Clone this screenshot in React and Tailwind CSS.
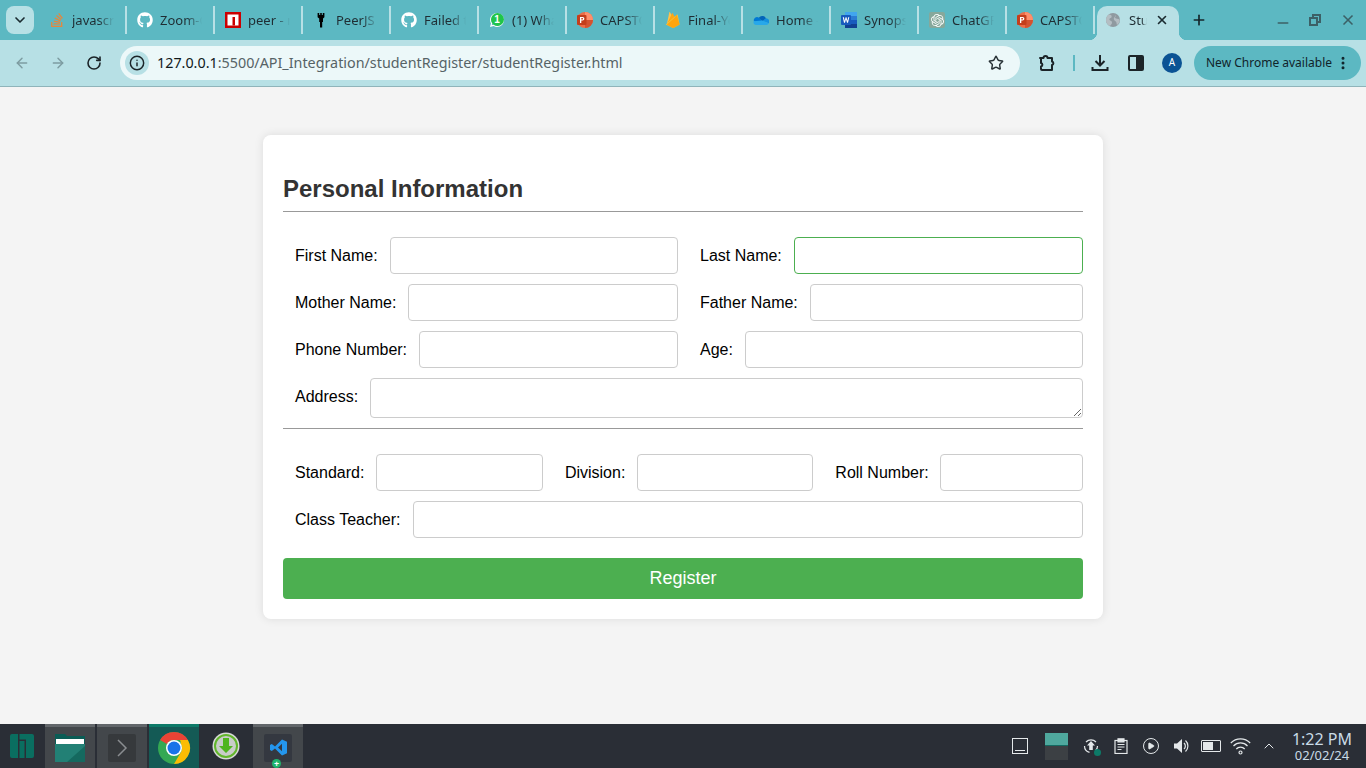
import React from "react";
import { FaGithub, FaStackOverflow, FaWhatsapp } from "react-icons/fa6";
import { SiOpenai } from "react-icons/si";
import { ArrowLeft, ArrowRight, RotateCw, Info, Star, X, Plus, Minus, EllipsisVertical, ChevronDown, ChevronUp, Play } from "lucide-react";

const Ppt = () => (
  <svg width="16" height="16" viewBox="0 0 16 16">
    <circle cx="8" cy="8" r="8" fill="#ed6c47" />
    <path d="M8 0a8 8 0 0 1 8 8H8z" fill="#ff8f6b" />
    <path d="M8 8h8a8 8 0 0 1-8 8z" fill="#d35230" />
    <rect x="0" y="3" width="9.5" height="10" rx="1" fill="#c43e1c" />
    <path d="M3 5h2.6a1.8 1.8 0 0 1 0 3.6H4.3V11H3z M4.3 6.1v1.4h1.1a.7.7 0 0 0 0-1.4z" fill="#fff" fillRule="evenodd" />
  </svg>
);
const Word = () => (
  <svg width="16" height="16" viewBox="0 0 16 16">
    <rect x="4" y="0" width="12" height="16" rx="1" fill="#2b7cd3" />
    <rect x="4" y="0" width="12" height="4" fill="#41a5ee" />
    <rect x="4" y="8" width="12" height="4" fill="#185abd" />
    <rect x="4" y="12" width="12" height="4" fill="#103f91" />
    <rect x="0" y="3" width="10" height="10" rx="1" fill="#185abd" />
    <path d="M1.8 5.2h1.1l.8 3.6.9-3.6h.9l.9 3.6.8-3.6h1.1L7 10.8H6L5 7.2l-1 3.6H3z" fill="#fff" />
  </svg>
);
const Firebase = () => (
  <svg width="16" height="16" viewBox="0 0 16 16">
    <path d="M1.800 12.600 4.300 0.400c.1-.4.5-.4.7-.1l2.600 4.600z" fill="#ffc24a" />
    <path d="M1.800 12.600 10 5.200 7.600 1.200c-.2-.3-.5-.3-.6 0z" fill="#ffa712" />
    <path d="M11.800 2.800c.1-.4.6-.5.800-.2l2 10-5.800 3.200c-.4.200-.9.200-1.300 0l-6.700-3.200z" fill="#f6c23c" />
    <path d="M1.800 12.800 10 5.200l1.800-2.400 2.800 9.800-5.800 3.200c-.4.200-.9.200-1.300 0z" fill="#ffa50e" />
  </svg>
);
const OneDrive = () => (
  <svg width="16" height="16" viewBox="0 0 16 16">
    <path d="M6.600 5a4 4 0 0 1 6.400 1.400L9.500 9.600 5.600 6z" fill="#0364b8" />
    <path d="M5.600 5.400A3.400 3.400 0 0 0 .8 9.200l3.800 1.400 4.400-1.500z" fill="#0078d4" />
    <path d="M12.800 6.300a3.200 3.200 0 0 1 3 4.900L9.500 9.200z" fill="#1490df" />
    <path d="M.8 9.200A2.600 2.600 0 0 0 3.200 13h10.200a2.600 2.600 0 0 0 2.400-1.800L9.400 8.600z" fill="#28a8ea" />
  </svg>
);
const Npm = () => (
  <svg width="16" height="16" viewBox="0 0 16 16">
    <rect width="16" height="16" fill="#cb0000" />
    <rect x="2.500" y="2.500" width="11" height="11" fill="#fff" />
    <rect x="7.500" y="5" width="2.500" height="8.500" fill="#cb0000" />
  </svg>
);
const Peer = () => (
  <svg width="16" height="16" viewBox="0 0 16 16">
    <path d="M4.600 1h1.600v2h1V1h1.600v2h1V1h1.600v4.200l-1.400 1.400V10H6.200V6.600L4.600 5.200z" fill="#000" />
    <rect x="7" y="10" width="2.200" height="5.500" fill="#000" />
  </svg>
);
const Whats = () => (
  <span className="relative flex h-4 w-4 items-center justify-center">
    <FaWhatsapp className="absolute left-0 top-0 h-4 w-4 text-white" />
    <span className="absolute left-[1.500px] top-[1px] h-[13px] w-[13px] rounded-full bg-[#1fc54a]" />
    <span className="relative text-[10px] font-bold leading-none text-white [font-family:'Liberation_Sans',sans-serif]">1</span>
  </span>
);
const Globe = () => (
  <svg width="16" height="16" viewBox="0 0 16 16">
    <circle cx="8" cy="8" r="7" fill="#8f9aa0" />
    <path d="M4 2.500c2 .3 3 1 2.600 2.400S4 6 4.400 7.600 7 8.600 7 10.600 5.600 13 5 14c-2.500-1-4-3.500-4-6s1.200-4.300 3-5.500z M11 3c.5 1.200-1.500 2-.8 3s3 .3 4.600 1.800c0 2-1 4-2.800 5.200-.6-1.500-.1-2.800-1.500-3.800s-2.500-2.500-1-4z" fill="#b4bec3" />
  </svg>
);

const tabs = [
  { icon: <FaStackOverflow className="h-4 w-4 text-[#e8863a]" />, label: "javascript - Stack" },
  { icon: <FaGithub className="h-4 w-4 text-white" />, label: "Zoom-Clone" },
  { icon: <Npm />, label: "peer - npm" },
  { icon: <Peer />, label: "PeerJS - Simple" },
  { icon: <FaGithub className="h-4 w-4 text-white" />, label: "Failed to" },
  { icon: <Whats />, label: "(1) WhatsApp" },
  { icon: <Ppt />, label: "CAPSTONE" },
  { icon: <Firebase />, label: "Final-Year" },
  { icon: <OneDrive />, label: "Home - One" },
  { icon: <Word />, label: "Synopsis" },
  { icon: <span className="flex h-4 w-4 items-center justify-center rounded-[2px] bg-[#86a89b]"><SiOpenai className="h-[13px] w-[13px] text-white" /></span>, label: "ChatGPT" },
  { icon: <Ppt />, label: "CAPSTONE" },
];

function Tab({ icon, label }) {
  return (
    <div className="flex h-7 w-[88px] shrink-0 items-center border-r-2 border-[#b7e0e5] pl-2.5">
      <span className="flex h-4 w-4 shrink-0 items-center justify-center">{icon}</span>
      <span className="ml-[7px] w-[42px] overflow-hidden whitespace-nowrap pt-px text-[13px] text-[#1f2d33] [mask-image:linear-gradient(to_right,black_62%,transparent)]">{label}</span>
    </div>
  );
}

function Field({ label, className = "", labelClass = "", children }) {
  return (
    <div className={`flex items-center gap-3 ${className}`}>
      <label className={`whitespace-nowrap text-base text-black ${labelClass}`}>{label}</label>
      {children}
    </div>
  );
}

const inputCls = "h-[37px] min-w-0 flex-1 rounded border border-[#ccc] bg-white outline-none";

function Chrome() {
  return (
    <svg width="34" height="34" viewBox="0 0 34 34">
      <circle cx="17" cy="17" r="16" fill="#34a853" />
      <path d="M17 1a16 16 0 0 1 13.860 8H17a8 8 0 0 0-7 4L3.140 9A16 16 0 0 1 17 1z" fill="#ea4335" />
      <path d="M30.860 9A16 16 0 0 1 17 33l7-12a8 8 0 0 0-.100-8 8 8 0 0 0-.900-4z" fill="#fbbc04" />
      <circle cx="17" cy="17" r="8" fill="#fff" />
      <circle cx="17" cy="17" r="6.500" fill="#1a73e8" />
    </svg>
  );
}

export default function App() {
  return (
    <div className="flex h-screen w-full flex-col overflow-hidden bg-[#f4f4f4] [font-family:'Noto_Sans',sans-serif]">
      {/* tab strip */}
      <div className="flex h-10 shrink-0 items-end bg-[#5cb8c2]">
        <div className="mb-[6px] ml-[6px] mr-[5px] flex h-7 w-7 items-center justify-center rounded-lg bg-[#b7e0e5]">
          <ChevronDown className="h-4 w-4 text-[#1b2b30]" strokeWidth={2.500} />
        </div>
        <div className="mb-[6px] flex">
          {tabs.map((t, i) => (
            <Tab key={i} {...t} />
          ))}
        </div>
        <div className="relative ml-[2px] flex h-[34px] w-[82px] shrink-0 items-center rounded-t-[10px] bg-[#b7e0e5] pb-[6px] pl-2">
          <span className="absolute -left-[8px] bottom-0 h-2 w-2 bg-[radial-gradient(circle_at_0_0,transparent_8px,#b7e0e5_8.500px)]" />
          <span className="absolute -right-[8px] bottom-0 h-2 w-2 bg-[radial-gradient(circle_at_100%_0,transparent_8px,#b7e0e5_8.500px)]" />
          <Globe />
          <span className="ml-2 w-[18px] overflow-hidden whitespace-nowrap pt-px text-[13px] text-[#1f2d33] [mask-image:linear-gradient(to_right,black_70%,transparent)]">Student</span>
          <X className="ml-[8px] h-[14px] w-[14px] text-[#1b2b30]" strokeWidth={2.800} />
        </div>
        <Plus className="mb-[12px] ml-[12px] h-4 w-4 text-[#15262b]" strokeWidth={2.500} />
        <div className="mb-[12px] ml-auto flex items-center gap-[16px] pr-[10px] text-[#3c6066]">
          <Minus className="h-4 w-4 translate-y-[3px]" strokeWidth={2.500} />
          <svg width="16" height="16" viewBox="0 0 16 16" fill="none" stroke="currentColor" strokeWidth="2">
            <rect x="3" y="6" width="7" height="7" />
            <path d="M6 6V3h7v7h-3" />
          </svg>
          <X className="ml-px h-4 w-4" strokeWidth={2.500} />
        </div>
      </div>

      {/* toolbar */}
      <div className="flex h-[47px] shrink-0 items-center border-b border-[#8fb4ba] bg-[#b7e0e5] pb-[1px]">
        <ArrowLeft className="ml-[14px] h-4 w-4 text-[#7d9ca1]" strokeWidth={2.200} />
        <ArrowRight className="ml-[20px] h-4 w-4 text-[#7d9ca1]" strokeWidth={2.200} />
        <RotateCw className="ml-[20px] h-4 w-4 text-[#1b2428]" strokeWidth={2.400} />
        <div className="ml-[18px] flex h-[34px] w-[900px] items-center rounded-full bg-[#ecf8f9] pl-[5px] pr-4">
          <span className="flex h-6 w-6 items-center justify-center rounded-full bg-[#b7e0e5]">
            <Info className="h-4 w-4 text-[#1b2428]" strokeWidth={2.200} />
          </span>
          <span className="ml-2 whitespace-nowrap text-[14.340px] text-[#566366]">
            <span className="text-[#10181b]">127.0.0.1</span>:5500/API_Integration/studentRegister/studentRegister.html
          </span>
          <Star className="ml-auto h-4 w-4 text-[#2a3438]" strokeWidth={2.200} />
        </div>
        <svg className="ml-[18px]" width="18" height="18" viewBox="0 0 18 18" fill="none" stroke="#1b2428" strokeWidth="2" strokeLinejoin="round">
          <path d="M2 4h3.500a2 2 0 0 1 4 0H14v3.500a1.800 1.800 0 0 1 0 3.500V16H4a1 1 0 0 1-1-1v-2.500a1.800 1.800 0 0 0 0-3.500V5a1 1 0 0 0-1-1z" />
        </svg>
        <span className="ml-[17px] h-4 w-[2px] bg-[#5cb8c2]" />
        <svg className="ml-[16px]" width="18" height="18" viewBox="0 0 18 18" fill="none" stroke="#1b2428" strokeWidth="2">
          <path d="M9 1v10M4.500 7 9 11.500 13.500 7M1.500 13v3h15v-3" />
        </svg>
        <span className="ml-[19px] flex h-4 w-4 overflow-hidden rounded-[2px] border-2 border-[#1b2428]">
          <span className="w-1/2" />
          <span className="w-1/2 bg-[#1b2428]" />
        </span>
        <span className="ml-[18px] flex h-5 w-5 items-center justify-center rounded-full bg-[#0b5394] text-[10px] text-white">A</span>
        <div className="ml-3 flex h-[34px] w-[167px] items-center rounded-full bg-[#5cb8c2] pl-3 text-xs text-[#10232a]">
          <span className="whitespace-nowrap">New Chrome available</span>
          <EllipsisVertical className="ml-[3px] h-4 w-4" strokeWidth={2.500} />
        </div>
      </div>

      {/* page */}
      <main className="min-h-0 flex-1 pt-12 [font-family:'Liberation_Sans',sans-serif]">
        <div className="mx-auto w-[840px] rounded-lg bg-white px-5 pb-5 pt-10 shadow-[0_0_10px_rgba(0,0,0,0.1)]">
          <h2 className="mb-[25px] border-b border-[#999] pb-[9px] text-2xl font-bold leading-[27px] text-[#333]">Personal Information</h2>

          <div className="flex flex-col gap-[10px]">
            <div className="grid grid-cols-2 gap-[10px]">
              <Field label="First Name:" className="pl-3"><input className={inputCls} /></Field>
              <Field label="Last Name:" className="pl-3"><input className="h-[37px] min-w-0 flex-1 rounded border border-[#4caf50] bg-white outline-none" /></Field>
            </div>
            <div className="grid grid-cols-2 gap-[10px]">
              <Field label="Mother Name:" className="pl-3"><input className={inputCls} /></Field>
              <Field label="Father Name:" className="pl-3"><input className={inputCls} /></Field>
            </div>
            <div className="grid grid-cols-2 gap-[10px]">
              <Field label="Phone Number:" className="pl-3"><input className={inputCls} /></Field>
              <Field label="Age:" className="pl-3"><input className={inputCls} /></Field>
            </div>
            <Field label="Address:" className="pl-3" labelClass="mb-[2px]">
              <textarea className="block h-10 min-w-0 flex-1 rounded border border-[#ccc] bg-white outline-none" />
            </Field>
          </div>

          <hr className="mb-[25px] mt-[10px] border-0 border-t border-[#999]" />

          <div className="flex flex-col gap-[10px]">
            <div className="flex gap-[22px] pl-3">
              <Field label="Standard:"><input className="h-[37px] w-[166.500px] rounded border border-[#ccc] bg-white outline-none" /></Field>
              <Field label="Division:"><input className="h-[37px] w-[176px] rounded border border-[#ccc] bg-white outline-none" /></Field>
              <Field label="Roll Number:" className="min-w-0 flex-1" labelClass="-mr-[0.600px]"><input className={inputCls} /></Field>
            </div>
            <Field label="Class Teacher:" className="pl-3"><input className={inputCls} /></Field>
          </div>

          <button className="mt-5 block h-[41px] w-full rounded bg-[#4caf50] pb-[2px] text-lg text-white">Register</button>
        </div>
      </main>

      {/* taskbar */}
      <div className="flex h-11 shrink-0 items-stretch bg-[#2a2e36]">
        <div className="flex w-[45px] items-center pl-[10px]">
          <svg width="24" height="24" viewBox="0 0 24 24" fill="#0a6e60">
            <path d="M0 2a2 2 0 0 1 2-2h6v24H2a2 2 0 0 1-2-2z" />
            <path d="M9.500 7h5v17h-5z" />
            <path d="M9.500 0H22a2 2 0 0 1 2 2v20a2 2 0 0 1-2 2h-6V5.500H9.500z" />
          </svg>
        </div>
        <div className="flex w-[50px] items-center justify-center border-t-[3px] border-[#62666a] bg-[#43474b]">
          <svg width="30" height="28" viewBox="0 0 30 28">
            <path d="M0 0h10l2 2h18v26H0z" fill="#0b5c55" />
            <rect x="1" y="5" width="28" height="5" fill="#fff" />
            <path d="M0 10h30v18H0z" fill="#228075" />
            <path d="M12 28 30 12v16z" fill="#15695f" />
          </svg>
        </div>
        <div className="ml-[2px] flex w-[50px] items-center justify-center border-t-[3px] border-[#62666a] bg-[#43474b]">
          <div className="flex h-7 w-7 items-center justify-center rounded-[2px] bg-[#36393c]">
            <svg width="14" height="18" viewBox="0 0 14 18" fill="none" stroke="#8a8d90" strokeWidth="1.500">
              <path d="M3 1l8 8-8 8" />
            </svg>
          </div>
        </div>
        <div className="ml-[2px] flex w-[50px] items-center justify-center border-t-[3px] border-[#0d7a68] bg-[#145a55]">
          <Chrome />
        </div>
        <div className="ml-[2px] flex w-[50px] items-center justify-center">
          <svg width="28" height="28" viewBox="0 0 28 28">
            <circle cx="14" cy="14" r="13.500" fill="#d8dad8" />
            <circle cx="14" cy="14" r="11" fill="#c9cdc9" stroke="#62b62c" strokeWidth="2" />
            <path d="M11 6h6v8h4l-7 7-7-7h4z" fill="#4fb51f" />
          </svg>
        </div>
        <div className="relative ml-[2px] flex w-[50px] items-center justify-center border-t-[3px] border-[#62666a] bg-[#43474b]">
          <div className="flex h-7 w-7 items-center justify-center rounded-[2px] bg-[#343840]">
            <svg width="17" height="17" viewBox="0 0 17 17" fill="#2496ed">
              <path d="M12 0.500 17 2.800v11.400L12 16.500 5 9.500 1.800 12 0 11V6l1.800-1L5 7.500zM12 4.800 8 8.500l4 3.700z" fillRule="evenodd" />
            </svg>
          </div>
          <span className="absolute bottom-0 left-[19px] flex h-[9px] w-[9px] items-center justify-center rounded-full bg-[#20b46c] text-[9px] font-bold leading-none text-white">+</span>
        </div>

        <div className="ml-auto flex items-center text-[#e4e8ea]">
          <svg width="16" height="16" viewBox="0 0 16 16" fill="none" stroke="currentColor" strokeWidth="1">
            <rect x="0.500" y="0.500" width="15" height="15" />
            <path d="M3 12.500h10" />
          </svg>
          <div className="ml-[17px] flex h-[27px] w-[23px] flex-col">
            <span className="h-[13px] border-b border-[#146a62] bg-[#4fa89e]" />
            <span className="h-[14px] bg-[#3c4044]" />
          </div>
          <span className="relative ml-[15px]">
            <svg className="block" width="16" height="16" viewBox="0 0 16 16" fill="none" stroke="currentColor" strokeWidth="1.200">
              <path d="M3 4a6.800 6.800 0 0 1 10 0M14.500 8a6.500 6.500 0 0 1-2 4.700M1.500 8a6.500 6.500 0 0 0 5 6.300" />
              <path d="M8 3 12 7.500H9.800V12H6.200V7.500H4z" fill="currentColor" stroke="none" />
            </svg>
            <span className="absolute -bottom-[2px] -right-[2px] h-[7px] w-[7px] rounded-full bg-[#0d7a68]" />
          </span>
          <svg className="ml-[14px]" width="16" height="16" viewBox="0 0 16 16" fill="none" stroke="currentColor" strokeWidth="1.200">
            <rect x="2" y="2.500" width="12" height="13" />
            <path d="M5 .8h6v3H5z" fill="currentColor" />
            <path d="M4.500 6.500h7M4.500 9h7M4.500 11.500h4" />
          </svg>
          <span className="ml-[14px] flex h-4 w-4 items-center justify-center rounded-full border border-[#e4e8ea]">
            <Play className="h-2 w-2 fill-current" />
          </span>
          <svg className="ml-[14px]" width="16" height="16" viewBox="0 0 16 16" fill="none" stroke="currentColor" strokeWidth="1.200">
            <path d="M1 5.500h3L9 1v14L4 10.500H1z" fill="currentColor" stroke="none" />
            <path d="M11 5a4 4 0 0 1 0 6M12.500 2.500a7.500 7.500 0 0 1 0 11" />
          </svg>
          <span className="ml-[12px] flex h-[12px] w-5 items-center rounded-[1px] border border-[#e4e8ea] p-px">
            <span className="h-full w-[10px] bg-[#e4e8ea]" />
          </span>
          <svg className="ml-[9px]" width="21" height="18" viewBox="0 0 21 18" fill="none" stroke="currentColor" strokeWidth="1.200">
            <path d="M.8 6a13.500 13.500 0 0 1 19.400 0M3.500 9a9.500 9.500 0 0 1 14 0M6.300 12a5.500 5.500 0 0 1 8.400 0" />
            <circle cx="10.500" cy="15.500" r="1.500" />
          </svg>
          <ChevronUp className="ml-[10px] h-4 w-4" strokeWidth={1.500} />
          <div className="ml-[15px] mr-[14px] flex flex-col items-center text-[#c9dbe6]">
            <span className="text-base leading-[17px]">1:22 PM</span>
            <span className="translate-y-px text-[13px] leading-[13px]">02/02/24</span>
          </div>
        </div>
      </div>
    </div>
  );
}
